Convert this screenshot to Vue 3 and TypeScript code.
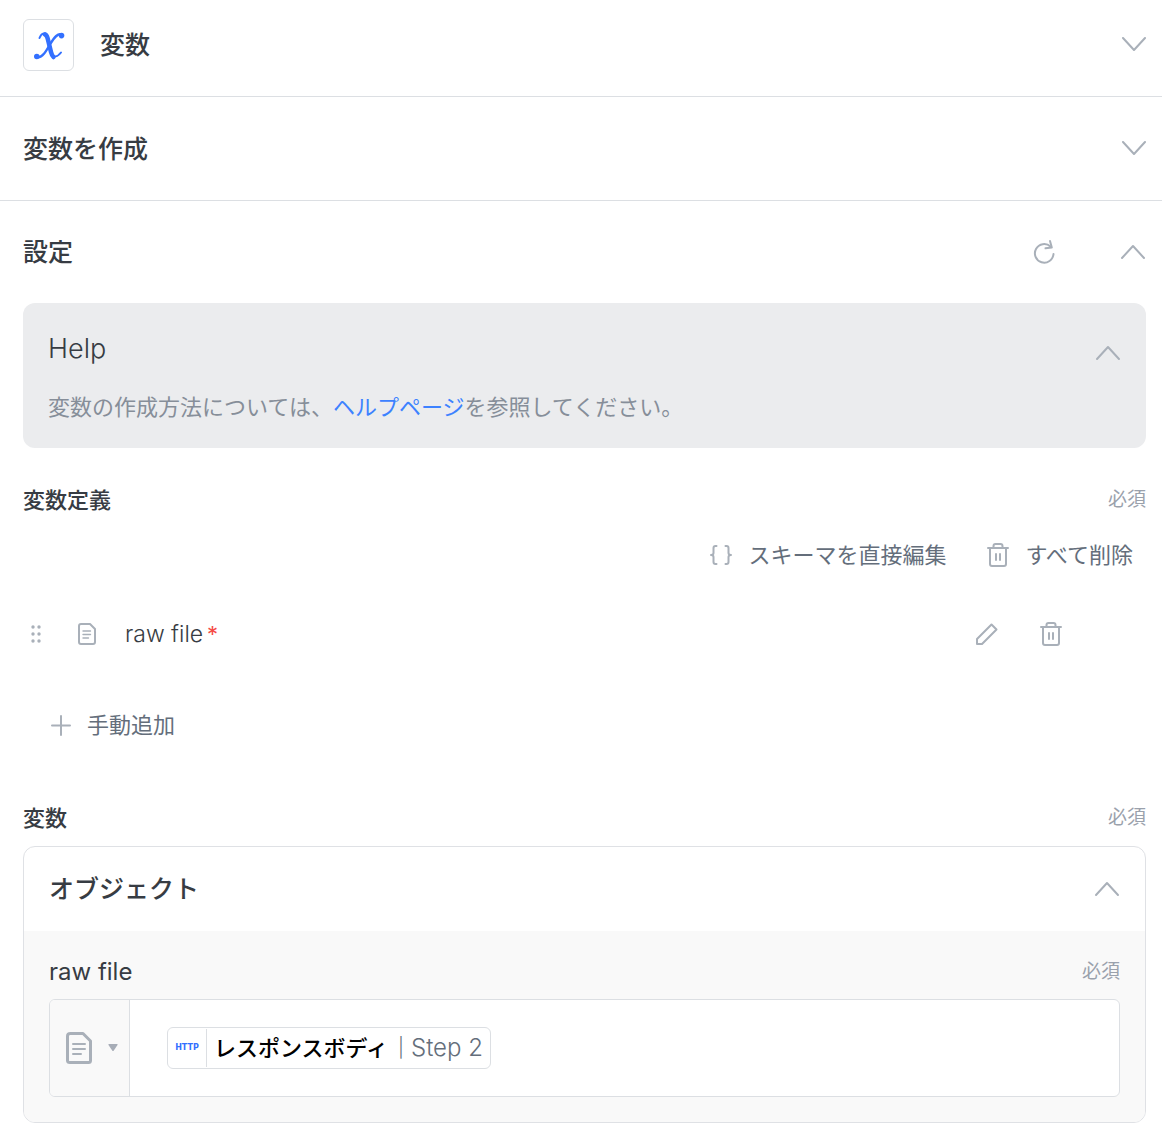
<script setup lang="ts">
import { ref } from 'vue'

const actionOpen = ref(false)
const methodOpen = ref(false)
const settingsOpen = ref(true)
const helpOpen = ref(true)
const objectOpen = ref(true)
</script>

<template>
  <main class="panel">
    <section class="row row-app">
      <span class="logo">
        <svg width="50" height="50" viewBox="0 0 50 50" aria-hidden="true">
          <g fill="none" stroke="#3370ff" stroke-linecap="round">
            <path d="M15.500 18C17.500 12.500 22 11.500 24 17L27.500 32C29 38.500 33.500 37 37 32.500" stroke-width="2" />
            <path d="M21 14.500C22.500 15 23.300 17 23.800 19L27 32C27.500 34 28.200 36 29.500 37" stroke-width="4.500" />
            <path d="M38 14.800C34 12.500 30.500 17 26.500 23.500C22 31.500 18 38.500 13 37.200" stroke-width="2.400" />
          </g>
          <circle cx="37.500" cy="15.600" r="2.800" fill="#3370ff" />
          <circle cx="12.800" cy="36.500" r="2.800" fill="#3370ff" />
        </svg>
      </span>
      <h2 class="title">変数</h2>
      <button class="icon-btn end" type="button" aria-label="変数" :aria-expanded="actionOpen" @click="actionOpen = !actionOpen">
        <svg class="chevron" viewBox="0 0 26 16"><path d="M3 1l11 12L25 1" /></svg>
      </button>
    </section>

    <section class="row row-method">
      <h2 class="title">変数を作成</h2>
      <button class="icon-btn end" type="button" aria-label="変数を作成" :aria-expanded="methodOpen" @click="methodOpen = !methodOpen">
        <svg class="chevron" viewBox="0 0 26 16"><path d="M3 1l11 12L25 1" /></svg>
      </button>
    </section>

    <section class="settings">
      <header class="settings-head">
        <h2 class="title">設定</h2>
        <button class="icon-btn end" type="button" aria-label="更新">
          <svg width="24" height="26" viewBox="0 0 24 26" class="line">
            <path d="M21.500 15A9.300 9.300 0 1 1 18.500 7.500" />
            <path d="M18 2l1.800 6.500-6.300.800" />
          </svg>
        </button>
        <button class="icon-btn toggle" type="button" aria-label="設定" :aria-expanded="settingsOpen" @click="settingsOpen = !settingsOpen">
          <svg class="chevron" viewBox="0 0 26 16"><path d="M2 14L13 2l11 12" /></svg>
        </button>
      </header>

      <div class="help">
        <div class="help-head">
          <h3 class="help-title">Help</h3>
          <button class="icon-btn end" type="button" aria-label="Help" :aria-expanded="helpOpen" @click="helpOpen = !helpOpen">
            <svg class="chevron" viewBox="0 0 26 16"><path d="M2 14L13 2l11 12" /></svg>
          </button>
        </div>
        <p class="help-text">変数の作成方法については、<a href="#help">ヘルプページ</a>を参照してください。</p>
      </div>

      <div class="field-head definition-head">
        <h3 class="label">変数定義</h3>
        <span class="required">必須</span>
      </div>

      <div class="toolbar">
        <button class="text-btn" type="button">
          <svg width="24" height="24" viewBox="0 0 24 24" class="line">
            <path d="M7.500 3H6.500Q4.500 3 4.500 5V10Q4.500 12 2 12Q4.500 12 4.500 14V19Q4.500 21 6.500 21H7.500M16.500 3H17.500Q19.500 3 19.500 5V10Q19.500 12 22 12Q19.500 12 19.500 14V19Q19.500 21 17.500 21H16.500" />
          </svg>
          スキーマを直接編集
        </button>
        <button class="text-btn" type="button">
          <svg width="24" height="26" viewBox="0 0 24 26" class="line">
            <path d="M2 6H22M7.500 6V4Q7.500 2 9.500 2H14.500Q16.500 2 16.500 4V6M4 6V22Q4 24 6 24H18Q20 24 20 22V6M10 12V18M14 12V18" />
          </svg>
          すべて削除
        </button>
      </div>

      <div class="variable">
        <svg width="12" height="20" viewBox="0 0 12 20" class="drag" aria-hidden="true">
          <circle cx="2" cy="3" r="1.700" /><circle cx="8" cy="3" r="1.700" />
          <circle cx="2" cy="10" r="1.700" /><circle cx="8" cy="10" r="1.700" />
          <circle cx="2" cy="17" r="1.700" /><circle cx="8" cy="17" r="1.700" />
        </svg>
        <svg width="18" height="22" viewBox="0 0 18 22" class="line" aria-hidden="true">
          <path d="M3 1H12L17 6V19Q17 21 15 21H3Q1 21 1 19V3Q1 1 3 1Z" />
          <path d="M5 8H12.500M5 11.500H12.500M5 15H10.500" stroke-width="1.400" />
        </svg>
        <span class="variable-name">raw file</span>
        <span class="star">*</span>
        <button class="icon-btn end" type="button" aria-label="編集">
          <svg width="24" height="24" viewBox="0 0 24 24" class="line">
            <path d="M2 22V17L16.500 2.500L21.500 7.500L7 22Z" />
          </svg>
        </button>
        <button class="icon-btn remove" type="button" aria-label="削除">
          <svg width="24" height="26" viewBox="0 0 24 26" class="line">
            <path d="M2 6H22M7.500 6V4Q7.500 2 9.500 2H14.500Q16.500 2 16.500 4V6M4 6V22Q4 24 6 24H18Q20 24 20 22V6M10 12V18M14 12V18" />
          </svg>
        </button>
      </div>

      <button class="text-btn add" type="button">
        <svg width="22" height="22" viewBox="0 0 22 22" class="line"><path d="M11 2V21M2 11.500H20" /></svg>
        手動追加
      </button>

      <div class="field-head values-head">
        <h3 class="label">変数</h3>
        <span class="required">必須</span>
      </div>

      <div class="object">
        <header class="object-head">
          <h3 class="title">オブジェクト</h3>
          <button class="icon-btn end" type="button" aria-label="オブジェクト" :aria-expanded="objectOpen" @click="objectOpen = !objectOpen">
            <svg class="chevron" viewBox="0 0 26 16"><path d="M2 14L13 2l11 12" /></svg>
          </button>
        </header>
        <div class="object-body">
          <div class="field-head">
            <span class="property">raw file</span>
            <span class="required">必須</span>
          </div>
          <div class="value">
            <button class="type" type="button" aria-label="タイプ">
              <svg width="26" height="32" viewBox="0 0 26 32" class="line file-large">
                <path d="M4.500 1.500H17L24.500 9V28.500Q24.500 30.500 22.500 30.500H4Q1.500 30.500 1.500 28.500V4Q1.500 1.500 4.500 1.500Z" />
                <path d="M7 12H19M7 17H19M7 22H15" stroke-width="2" />
              </svg>
              <svg width="10" height="8" viewBox="0 0 10 8"><path d="M1 0H9Q10 0 9.500 1L5.800 6.500Q5 7.500 4.200 6.500L.5 1Q0 0 1 0Z" fill="#a7adb7" /></svg>
            </button>
            <div class="content">
              <span class="chip">
                <span class="http">HTTP</span>
                <span class="chip-text">レスポンスボディ</span>
                <span class="step"><span class="bar">|</span>Step 2</span>
              </span>
            </div>
          </div>
        </div>
      </div>
    </section>
  </main>
</template>

<style>
body {
  background: #fff;
}
</style>

<style scoped>
* {
  box-sizing: border-box;
}
.panel {
  color: #373c43;
  font-family: Inter, "Noto Sans CJK JP", sans-serif;
  font-size: 22px;
  line-height: 32px;
}
h2, h3, p {
  margin: 0;
}
button {
  border: 0;
  padding: 0;
  background: none;
  color: inherit;
  font: inherit;
  cursor: pointer;
}
svg {
  display: block;
  flex: none;
}
.line, .chevron {
  fill: none;
  stroke: #a9b0b9;
  stroke-width: 2;
  stroke-linecap: round;
  stroke-linejoin: round;
}
.chevron {
  width: 26px;
  height: 16px;
}
.row {
  display: flex;
  align-items: center;
  height: 104px;
  padding: 0 16px 0 23px;
  border-bottom: 1px solid #dcdfe3;
}
.row-app {
  height: 97px;
  padding-bottom: 6px;
}
.logo {
  width: 51px;
  height: 52px;
  margin-right: 26px;
  border: 1px solid #dcdfe3;
  border-radius: 6px;
}
.title {
  font-size: 25px;
  font-weight: 500;
  line-height: 40px;
}
.icon-btn {
  display: flex;
}
.end {
  margin-left: auto;
}
.toggle {
  margin-left: 64px;
}
.settings {
  padding: 0 16px 20px 23px;
}
.settings-head {
  display: flex;
  align-items: center;
  height: 102px;
}
.help {
  padding: 26px 25px 25px;
  border-radius: 12px;
  background: #ebecee;
}
.help-head {
  display: flex;
  align-items: center;
  margin-bottom: 22px;
}
.help-head .icon-btn {
  padding-top: 8px;
}
.help-title {
  font-size: 27px;
  font-weight: 300;
  line-height: 40px;
}
.help-text {
  color: #868e99;
}
.help-text a {
  color: #3d82ff;
  text-decoration: none;
}
.field-head {
  display: flex;
  align-items: center;
  justify-content: space-between;
}
.definition-head {
  margin-top: 36px;
}
.label {
  font-size: 22px;
  font-weight: 500;
}
.required {
  color: #9aa1ac;
  font-size: 19px;
}
.toolbar {
  display: flex;
  justify-content: flex-end;
  gap: 40px;
  margin-top: 23px;
  padding-right: 13px;
}
.text-btn {
  display: flex;
  align-items: center;
  gap: 15px;
  color: #646e7b;
}
.variable {
  display: flex;
  align-items: center;
  height: 48px;
  margin-top: 39px;
  padding: 0 83px 0 8px;
}
.drag {
  margin-right: 35px;
  fill: #a9b0b9;
}
.variable-name {
  margin-left: 29px;
  font-size: 23px;
  font-weight: 300;
}
.star {
  margin-left: 4px;
  color: #f54a45;
}
.remove {
  margin-left: 40px;
}
.add {
  margin: 51px 0 0 27px;
}
.values-head {
  margin-top: 61px;
}
.object {
  margin-top: 12px;
  overflow: hidden;
  border: 1px solid #dfe1e5;
  border-radius: 12px;
}
.object-head {
  display: flex;
  align-items: center;
  height: 84px;
  padding: 0 25px;
}
.object-body {
  padding: 25px;
  background: #f9f9f9;
}
.property {
  font-size: 24px;
}
.value {
  display: flex;
  height: 98px;
  margin-top: 11px;
  border: 1px solid #dcdfe3;
  border-radius: 6px;
  background: #fff;
  overflow: hidden;
}
.type {
  display: flex;
  align-items: center;
  justify-content: center;
  gap: 16px;
  width: 80px;
  padding-left: 4px;
  border-right: 1px solid #dcdfe3;
  background: #f9f9f9;
}
.file-large {
  stroke-width: 3;
}
.content {
  display: flex;
  flex: 1;
  align-items: center;
  padding-left: 37px;
}
.chip {
  display: flex;
  align-items: center;
  height: 42px;
  padding-right: 7px;
  border: 1px solid #dcdfe3;
  border-radius: 6px;
}
.http {
  width: 39px;
  border-right: 1px solid #dcdfe3;
  color: #3370ff;
  font-family: "DejaVu Sans", sans-serif;
  font-size: 8px;
  font-weight: 700;
  line-height: 38px;
  text-align: center;
}
.chip-text {
  padding-left: 7px;
  color: #000;
  font-weight: 500;
}
.step {
  display: flex;
  margin-left: 10px;
  color: #646e7b;
  font-size: 24px;
  font-weight: 300;
}
.bar {
  margin-right: 7px;
  font-size: 19px;
}
</style>
